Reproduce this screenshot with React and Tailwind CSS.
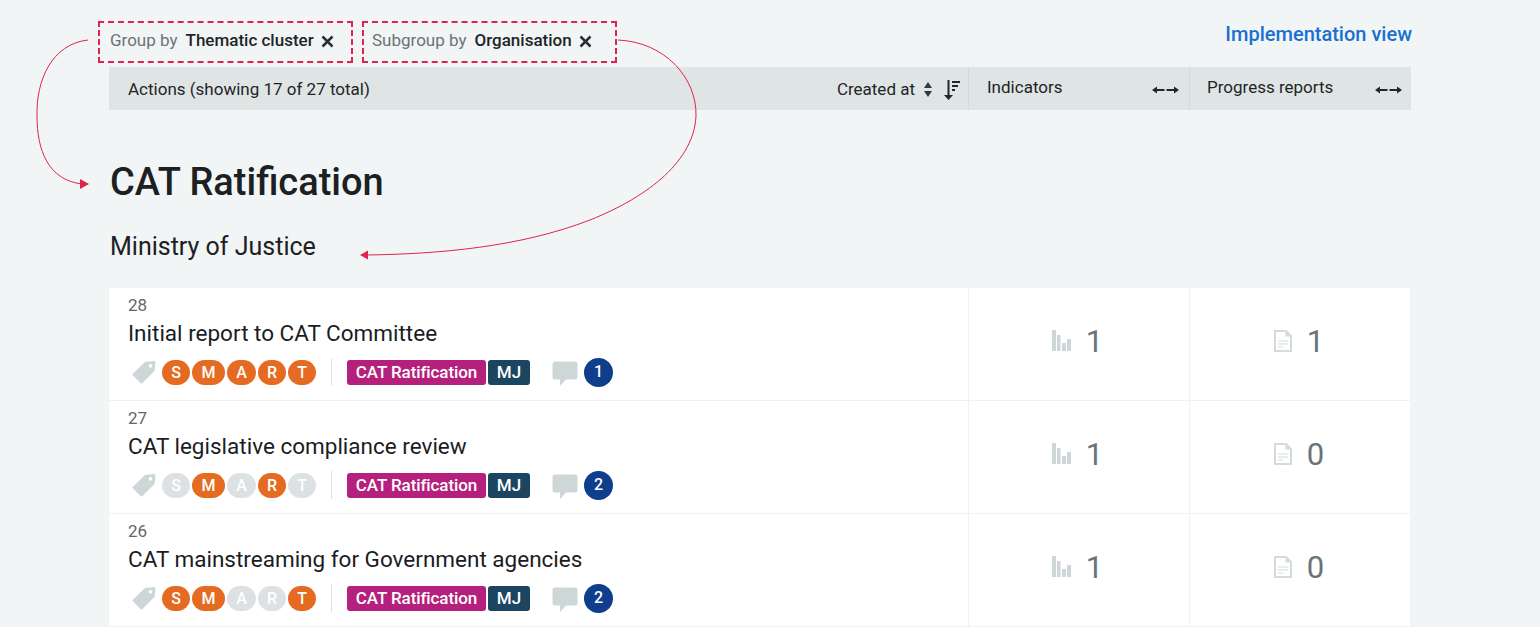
import React from 'react';

const rows = [
  { id: 28, title: 'Initial report to CAT Committee', smart: [1, 1, 1, 1, 1], comments: 1, indicators: 1, reports: 1 },
  { id: 27, title: 'CAT legislative compliance review', smart: [0, 1, 0, 1, 0], comments: 2, indicators: 1, reports: 0 },
  { id: 26, title: 'CAT mainstreaming for Government agencies', smart: [1, 1, 0, 0, 1], comments: 2, indicators: 1, reports: 0 },
];

const letters = [
  { l: 'S', w: 'w-[28px]' },
  { l: 'M', w: 'w-[33px]' },
  { l: 'A', w: 'w-[29px]' },
  { l: 'R', w: 'w-[28px]' },
  { l: 'T', w: 'w-[28px]' },
];

const CloseIcon = () => (
  <svg width="13" height="13" viewBox="0 0 13 13" className="ml-[7px]">
    <path d="M1.500 1.500 L11.500 11.500 M11.500 1.500 L1.500 11.500" stroke="#2a2f33" strokeWidth="2.500" />
  </svg>
);

const ExpandIcon = () => (
  <svg width="27" height="10" viewBox="0 0 27 10">
    <path d="M0 5 L5 1.500 V4 H12.500 V6 H5 V8.500 Z M27 5 L22 1.500 V4 H14.500 V6 H22 V8.500 Z" fill="#22272a" />
  </svg>
);

const SortIcon = () => (
  <svg width="17" height="20" viewBox="0 0 17 20">
    <path d="M4.500 0 H6.500 V15 H10 L5.500 20 L1 15 H4.500 Z" fill="#22272a" />
    <path d="M9 1 H17 V3 H9 Z M9 5 H15 V7 H9 Z M9 9 H12 V11 H9 Z" fill="#22272a" />
  </svg>
);

const UpDownIcon = () => (
  <svg width="8" height="15" viewBox="0 0 8 15">
    <path d="M4 0 L8 6 H0 Z M4 15 L8 9 H0 Z" fill="#33383b" />
  </svg>
);

const TagIcon = () => (
  <svg width="24" height="24" viewBox="0 0 24 24">
    <path d="M13 2 L22 1 Q23.500 1 23.500 3 L22.500 11 L10.500 23 Q9.500 24 8.500 23 L1 15.500 Q0 14.500 1 13.500 Z M18.500 4 A1.800 1.800 0 1 0 18.501 4 Z" fill="#ced7d8" fillRule="evenodd" />
  </svg>
);

const CommentIcon = () => (
  <svg width="26" height="26" viewBox="0 0 26 26">
    <path d="M3 0.500 H23 Q25.500 0.500 25.500 3 V16 Q25.500 18.500 23 18.500 H14 L8 25 V18.500 H3 Q0.500 18.500 0.500 16 V3 Q0.500 0.500 3 0.500 Z" fill="#ced7d8" />
  </svg>
);

const BarsIcon = () => (
  <svg width="19" height="21" viewBox="0 0 19 21">
    <path d="M0 0 H4 V21 H0 Z M5 5 H8.500 V21 H5 Z M10 13 H14 V21 H10 Z M15 9 H19 V21 H15 Z" fill="#ced7d8" />
  </svg>
);

const DocIcon = () => (
  <svg width="18" height="22" viewBox="0 0 18 22">
    <path d="M1 1 H12 L17 6 V21 H1 Z" fill="#fff" stroke="#d3dbdc" strokeWidth="2" />
    <path d="M11.500 1 V6.500 H17 Z" fill="#d3dbdc" />
    <path d="M4 11 H14 M4 14 H14 M4 17 H9" stroke="#d3dbdc" strokeWidth="1" />
  </svg>
);

const Arrows = () => (
  <svg width="720" height="270" viewBox="0 0 720 270" fill="none" className="absolute left-0 top-0 pointer-events-none">
    <path d="M88 40 C52 44 36 80 37 116 C37 150 48 180 82 184" stroke="#e0234e" strokeWidth="1" />
    <path d="M89 184 L80 179 V189 Z" fill="#e0234e" />
    <path d="M618 40 C665 42 697 78 696 116 C694 160 650 196 590 220 C520 247 440 254 366 255" stroke="#e0234e" strokeWidth="1" />
    <path d="M360 255 L368 250.500 V259.500 Z" fill="#e0234e" />
  </svg>
);

const FilterBox = ({ label, value, inset }) => (
  <div className={`h-[42px] flex items-center ${inset} pb-[2px] border-2 border-dashed border-[#e0234e] text-[17px]`}>
    <span className="text-[#6a7377] mr-[8px]">{label}</span>
    <span className="font-medium text-[#1f2427]">{value}</span>
    <CloseIcon />
  </div>
);

const SmartBadges = ({ smart }) => (
  <div className="flex gap-[2px]">
    {letters.map(({ l, w }, i) => (
      <span
        key={l}
        className={`${w} h-[25px] pt-[1px] rounded-full flex items-center justify-center text-white text-[16px] font-medium ${smart[i] ? 'bg-[#e56a22]' : 'bg-[#dce2e3]'}`}
      >
        {l}
      </span>
    ))}
  </div>
);

const Row = ({ row }) => (
  <div className="flex h-[113px] bg-white border-b border-[#eef2f3]">
    <div className="w-[860px] pl-[19px] pt-[8px] border-r border-[#eef2f3]">
      <div className="text-[17px] leading-[18px] text-[#5f686c]">{row.id}</div>
      <div className="text-[22.500px] leading-[26px] mt-[6px] text-[#1a1d1f]">{row.title}</div>
      <div className="flex items-center mt-[11px] h-[30px]">
        <div className="ml-[4px] flex"><TagIcon /></div>
        <div className="ml-[6px]"><SmartBadges smart={row.smart} /></div>
        <div className="w-px h-[28px] bg-[#dce2e3] mx-[15px]" />
        <span className="w-[139px] h-[25px] pt-[2px] rounded-[3px] bg-[#b5207c] text-white text-[17px] tracking-[-0.1px] font-medium flex items-center justify-center">CAT Ratification</span>
        <span className="ml-[2px] w-[42px] h-[25px] pt-[2px] rounded-[3px] bg-[#1b4560] text-white text-[17px] font-medium flex items-center justify-center">MJ</span>
        <div className="ml-[22px] mt-[4px] flex"><CommentIcon /></div>
        <span className="ml-[6px] w-[29px] h-[29px] rounded-full bg-[#0e3e8c] text-white text-[16px] font-medium flex items-center justify-center">{row.comments}</span>
      </div>
    </div>
    <div className="w-[221px] flex items-start justify-center pt-[37px] gap-[15px] pr-[3px] border-r border-[#eef2f3]">
      <div className="pt-[5px]"><BarsIcon /></div>
      <span className="text-[31px] leading-[34px] text-[#6b7377]">{row.indicators}</span>
    </div>
    <div className="w-[220px] flex items-start justify-center pt-[37px] gap-[15px] pr-[2px]">
      <div className="pt-[5px]"><DocIcon /></div>
      <span className="text-[31px] leading-[34px] text-[#6b7377]">{row.reports}</span>
    </div>
  </div>
);

export default function App() {
  return (
    <div className="relative h-[627px] overflow-hidden bg-[#f1f5f6] font-['Roboto',sans-serif]">
      <div className="w-[1302px] ml-[109px]">
        <div className="flex justify-between h-[67px] pt-[21px]">
          <div className="flex gap-[9px] ml-[-11px]">
            <div className="w-[255px]"><FilterBox label="Group by" value="Thematic cluster" inset="pl-[10px]" /></div>
            <div className="w-[255px]"><FilterBox label="Subgroup by" value="Organisation" inset="pl-[8px]" /></div>
          </div>
          <a className="text-[20px] leading-[26px] font-medium text-[#1a6fd0] mr-[-1px]">Implementation view</a>
        </div>

        <div className="flex h-[43px] bg-[#dfe4e5] text-[17px] text-[#1f2427]">
          <div className="w-[860px] flex items-center justify-between pl-[19px] pr-[8px] border-r border-[#d3dadb]">
            <span className="pt-[3px]">Actions (showing 17 of 27 total)</span>
            <div className="flex items-center">
              <span className="pt-[2px]">Created at</span>
              <span className="ml-[9px] mr-[11px] pt-[2px] flex"><UpDownIcon /></span>
              <span className="pt-[2px] flex"><SortIcon /></span>
            </div>
          </div>
          <div className="w-[221px] flex items-center justify-between pl-[18px] pr-[10px] pb-[1px] border-r border-[#d3dadb]">
            <span>Indicators</span>
            <span className="pt-[4px] flex"><ExpandIcon /></span>
          </div>
          <div className="w-[221px] flex items-center justify-between pl-[17px] pr-[9px] pb-[1px]">
            <span>Progress reports</span>
            <span className="pt-[4px] flex"><ExpandIcon /></span>
          </div>
        </div>

        <h1 className="text-[38px] leading-[46px] font-medium text-[#1c2022] mt-[49px] ml-px">CAT Ratification</h1>
        <h2 className="text-[25px] leading-[30px] text-[#1c2022] mt-[27px] mb-[26px] ml-px">Ministry of Justice</h2>

        <div className="w-[1301px]">
          {rows.map((row) => <Row key={row.id} row={row} />)}
        </div>
      </div>
      <Arrows />
    </div>
  );
}
